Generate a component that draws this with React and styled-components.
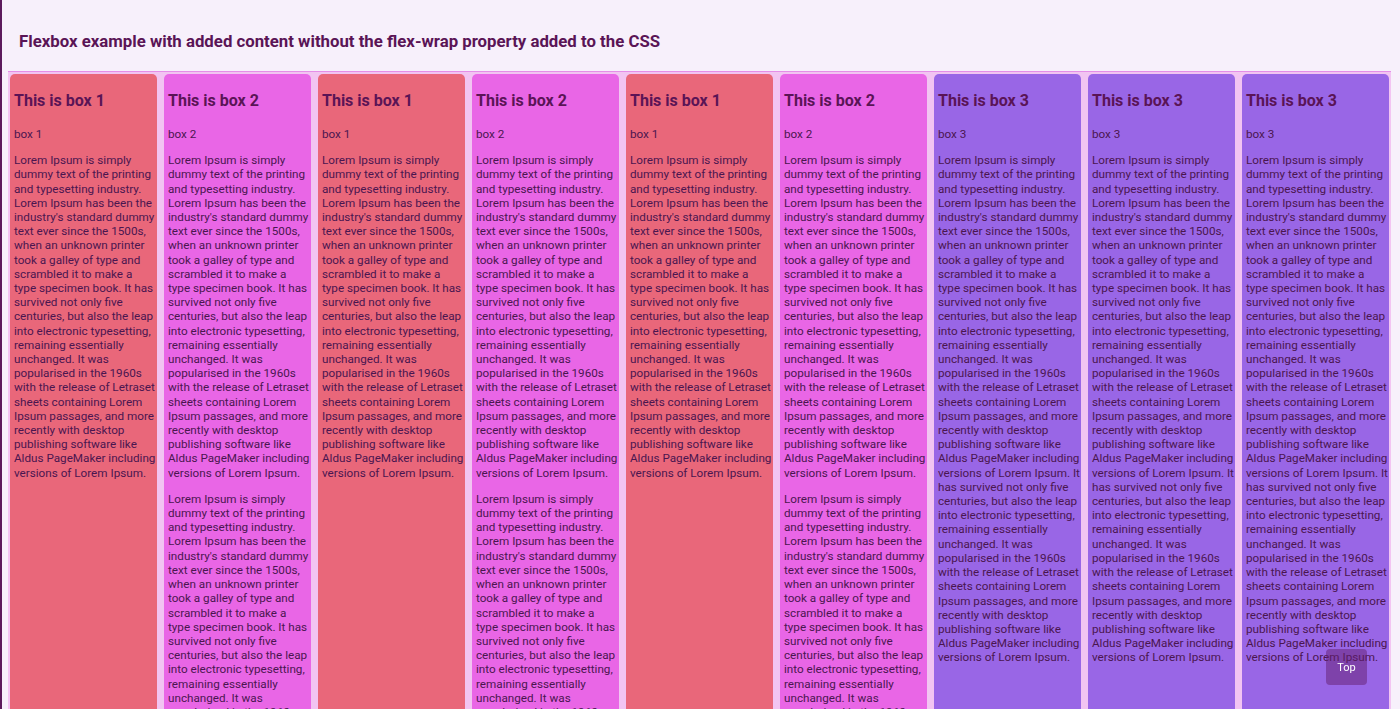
import React from "react";
import styled, { createGlobalStyle } from "styled-components";

const Global = createGlobalStyle`
  html, body { margin: 0; padding: 0; background: #f7f0fb; }
  body { font-family: Roboto, "Liberation Sans", sans-serif; color: #4b1650; }
`;

const Page = styled.div`
  border-left: 2px solid #5c1a5c;
  padding: 0 8px 0 6px;
  min-height: 709px;
`;

const Title = styled.h1`
  margin: 0;
  padding: 31px 0 19px 11px;
  font-size: 16.8px;
  font-weight: 700;
  line-height: 21px;
  color: #5a1456;
`;

const Row = styled.div`
  display: flex;
  gap: 7px;
  padding: 2px 2px 0 2px;
  background: #f2c4f2;
  border-top: 1px solid #e58ee8;
  width: 1379px;
`;

const colors = { 1: "#e9677a", 2: "#e966e6", 3: "#9966e6" };

const Box = styled.div`
  flex: 0 0 147px;
  background: ${(p) => colors[p.$n]};
  border-radius: 5px 5px 0 0;
  padding: 17px 1px 0 4px;
  box-sizing: border-box;
`;

const BoxTitle = styled.h2`
  margin: 0 0 16px;
  font-size: 16px;
  line-height: 20px;
  font-weight: 700;
  color: #5a1456;
`;

const Para = styled.p`
  margin: 0 0 12px;
  font-size: 11.7px;
  line-height: 14.2px;
`;

const TopButton = styled.a`
  position: fixed;
  right: 33px;
  bottom: 24px;
  width: 41px;
  height: 36px;
  display: flex;
  align-items: center;
  justify-content: center;
  border-radius: 4px;
  background: rgba(100, 30, 110, 0.5);
  color: #fff;
  font-size: 11px;
  text-decoration: none;
`;

const LOREM =
  "Lorem Ipsum is simply dummy text of the printing and typesetting industry. Lorem Ipsum has been the industry's standard dummy text ever since the 1500s, when an unknown printer took a galley of type and scrambled it to make a type specimen book. It has survived not only five centuries, but also the leap into electronic typesetting, remaining essentially unchanged. It was popularised in the 1960s with the release of Letraset sheets containing Lorem Ipsum passages, and more recently with desktop publishing software like Aldus PageMaker including versions of Lorem Ipsum.";
const TAIL =
  " It has survived not only five centuries, but also the leap into electronic typesetting, remaining essentially unchanged. It was popularised in the 1960s with the release of Letraset sheets containing Lorem Ipsum passages, and more recently with desktop publishing software like Aldus PageMaker including versions of Lorem Ipsum.";

const boxes = [1, 2, 1, 2, 1, 2, 3, 3, 3];

function FlexBox({ n }) {
  return (
    <Box $n={n}>
      <BoxTitle>This is box {n}</BoxTitle>
      <Para>box {n}</Para>
      {n === 1 && <Para>{LOREM}</Para>}
      {n === 2 && (
        <>
          <Para>{LOREM}</Para>
          <Para>{LOREM}</Para>
        </>
      )}
      {n === 3 && <Para>{LOREM + TAIL}</Para>}
    </Box>
  );
}

export default function App() {
  return (
    <>
      <Global />
      <Page>
        <Title>Flexbox example with added content without the flex-wrap property added to the CSS</Title>
        <Row>
          {boxes.map((n, i) => (
            <FlexBox key={i} n={n} />
          ))}
        </Row>
      </Page>
      <TopButton href="#">Top</TopButton>
    </>
  );
}
